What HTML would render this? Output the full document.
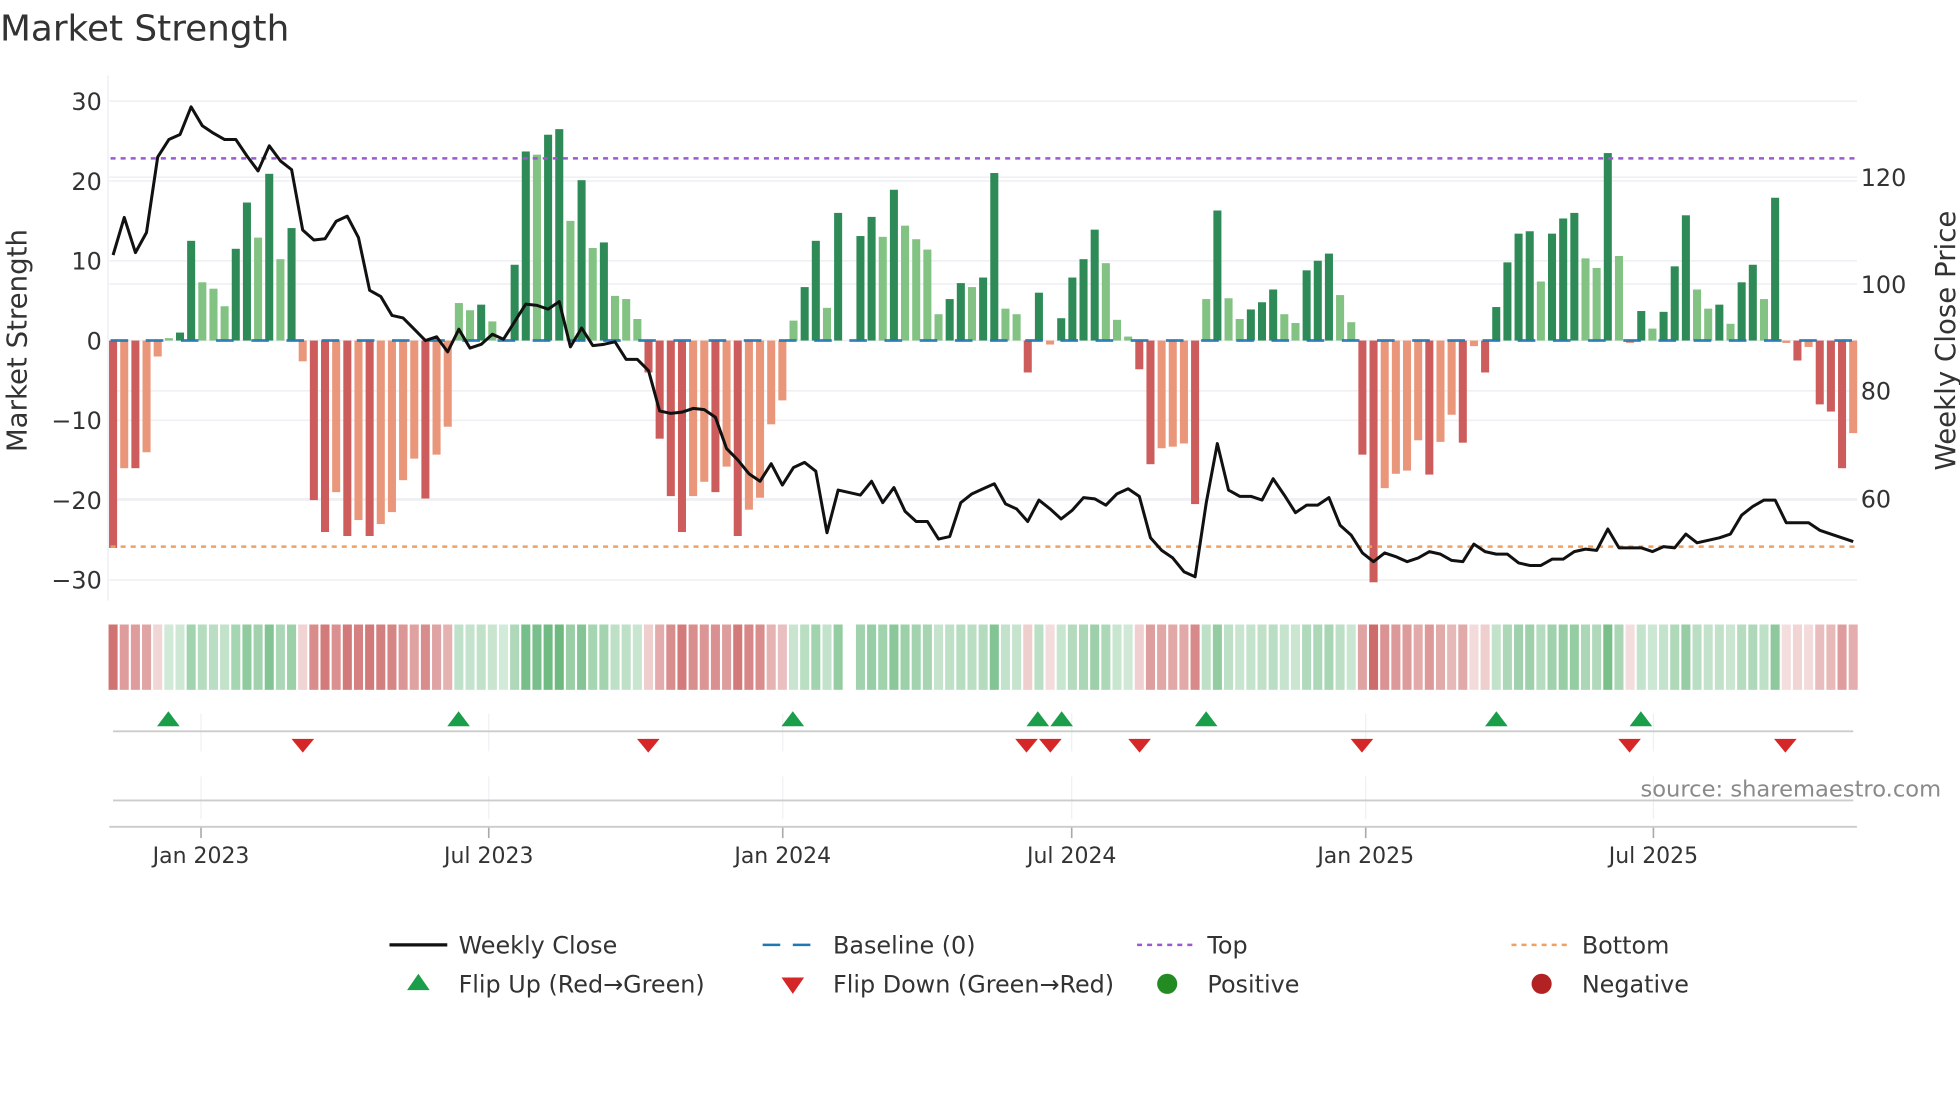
<!DOCTYPE html>
<html><head><meta charset="utf-8"><style>
html,body{margin:0;padding:0;background:#fff;width:1960px;height:1102px;overflow:hidden}
svg{display:block}
text{font-family:"DejaVu Sans","Liberation Sans",sans-serif;fill:#333}
</style></head><body>
<svg id="s" width="1960" height="1102" viewBox="0 0 1560 877" xmlns="http://www.w3.org/2000/svg">
<text x="0" y="32" font-size="28.5">Market Strength</text>
<g id="g"></g>
</svg>
<script>
var V=[-26,-16,-16,-14,-2,0.3,1,12.5,7.3,6.5,4.3,11.5,17.3,12.9,20.9,10.2,14.1,-2.6,-20,-24,-19,-24.5,-22.5,-24.5,-23,-21.5,-17.5,-14.8,-19.8,-14.3,-10.8,4.7,3.8,4.5,2.4,0.1,9.5,23.7,23.3,25.8,26.5,15,20.1,11.6,12.3,5.6,5.2,2.7,-4,-12.3,-19.5,-24,-19.5,-17.7,-19,-15.8,-24.5,-21.2,-19.7,-10.5,-7.5,2.5,6.7,12.5,4.1,16,0,13.1,15.5,13,18.9,14.4,12.7,11.4,3.3,5.2,7.2,6.7,7.9,21,4,3.3,-4,6,-0.5,2.8,7.9,10.2,13.9,9.7,2.6,0.5,-3.6,-15.5,-13.5,-13.3,-12.9,-20.5,5.2,16.3,5.3,2.7,3.9,4.8,6.4,3.3,2.2,8.8,10,10.9,5.7,2.3,-14.3,-30.3,-18.5,-16.7,-16.3,-12.5,-16.8,-12.7,-9.3,-12.8,-0.7,-4,4.2,9.8,13.4,13.7,7.4,13.4,15.3,16,10.3,9.1,23.5,10.6,-0.3,3.7,1.5,3.6,9.3,15.7,6.4,4,4.5,2.1,7.3,9.5,5.2,17.9,-0.3,-2.5,-0.8,-8,-8.9,-16,-11.6];
var P=[203,173,201,185,125,111,107,85,100,106,111,111,124,136,116,128,135,183,191,190,176,172,189,231,236,251,253,262,271,268,280,262,277,274,266,270,256,242,243,246,240,276,261,275,274,272,286,286,295,327,329,328,325,326,332,357,366,377,383,369,386,372,368,375,424,390,392,394,383,400,388,407,415,415,429,427,400,393,389,385,401,405,415,398,405,413,406,396,397,402,393,389,395,428,438,444,455,459,400,353,390,395,395,398,381,394,408,402,402,396,418,426,440,447,440,443,447,444,439,441,446,447,433,439,441,441,448,450,450,445,445,439,437,438,421,436,436,436,439,435,436,425,432,430,428,425,410,403,398,398,416,416,416,422,425,428,431];
var n=V.length,x0=90,dx=(1475-90)/(n-1);
function X(i){return x0+i*dx}
function Y(v){return 271-v*6.35}
var h='';
[30,20,10,0,-10,-20,-30].forEach(function(v){h+='<line x1="87" x2="1478" y1="'+Y(v)+'" y2="'+Y(v)+'" stroke="#eef0f4" stroke-width="1.3"/>';
h+='<text x="81" y="'+(Y(v)+7)+'" font-size="19" text-anchor="end">'+(v<0?'\u2212'+(-v):v)+'</text>';});
[[120,141],[100,226],[80,311],[60,397]].forEach(function(a){h+='<line x1="87" x2="1478" y1="'+a[1]+'" y2="'+a[1]+'" stroke="#eef0f4" stroke-width="1.3"/><text x="1481" y="'+(a[1]+7)+'" font-size="19">'+a[0]+'</text>';});
h+='<line x1="86" x2="86" y1="60" y2="478" stroke="#eef0f4" stroke-width="1.3"/>';
var ticks=[[160,'Jan 2023'],[389,'Jul 2023'],[623,'Jan 2024'],[853,'Jul 2024'],[1087,'Jan 2025'],[1316,'Jul 2025']];
ticks.forEach(function(t){h+='<line x1="'+t[0]+'" x2="'+t[0]+'" y1="568" y2="598" stroke="#eef0f4"/><line x1="'+t[0]+'" x2="'+t[0]+'" y1="618" y2="652" stroke="#eef0f4"/><line x1="'+t[0]+'" x2="'+t[0]+'" y1="658" y2="667" stroke="#aaa" stroke-width="1.3"/><text x="'+t[0]+'" y="687" font-size="17.5" text-anchor="middle">'+t[1]+'</text>';});
for(var i=0;i<n;i++){var v=V[i],p=i?Math.abs(V[i-1]):0,dark=Math.abs(v)>=p;var c=v>=0?(dark?'#2e8b57':'#82c282'):(dark?'#cd5c5c':'#e9967a');
var y1=Math.min(Y(v),271),hh=Math.abs(Y(v)-271);h+='<rect x="'+(X(i)-3.2)+'" y="'+y1+'" width="6.4" height="'+hh+'" fill="'+c+'"/>';}
h+='<line x1="88" x2="1476" y1="271" y2="271" stroke="#1f77b4" stroke-width="2.2" stroke-dasharray="14,14" opacity="0.9"/>';
h+='<line x1="88" x2="1476" y1="126" y2="126" stroke="#9b59d0" stroke-width="2" stroke-dasharray="4,4"/>';
h+='<line x1="88" x2="1476" y1="435" y2="435" stroke="#f0a060" stroke-width="2" stroke-dasharray="4,4"/>';
var pts='';for(i=0;i<n;i++)pts+=X(i).toFixed(1)+','+P[i]+' ';
h+='<polyline points="'+pts+'" fill="none" stroke="#111" stroke-width="2.4" stroke-linejoin="round"/>';
for(i=0;i<n;i++){var v=V[i];var t=Math.min(Math.abs(v)/28,1);var c;
if(v>0){t=0.25+0.6*t;c='rgb('+Math.round(255-(255-76)*t)+','+Math.round(255-(255-170)*t)+','+Math.round(255-(255-100)*t)+')';}
else if(v<0){t=0.2+0.7*t;c='rgb('+Math.round(255-(255-200)*t)+','+Math.round(255-(255-90)*t)+','+Math.round(255-(255-90)*t)+')';}
else c='#fff';
h+='<rect x="'+(X(i)-3.6)+'" y="497" width="7.2" height="52" fill="'+c+'"/>';}
h+='<line x1="90" x2="1475" y1="582" y2="582" stroke="#ccc" stroke-width="1.5"/><line x1="90" x2="1475" y1="637" y2="637" stroke="#ccc" stroke-width="1.5"/><line x1="87" x2="1478" y1="658" y2="658" stroke="#ccc" stroke-width="1.5"/>';
[134,365,631,826,845,960,1191,1306].forEach(function(x){h+='<polygon points="'+(x-9)+',578 '+(x+9)+',578 '+x+',566" fill="#1a9e4a"/>';});
[241,516,817,836,907,1084,1297,1421].forEach(function(x){h+='<polygon points="'+(x-9)+',588 '+(x+9)+',588 '+x+',599" fill="#d62728"/>';});
h+='<text x="1545" y="634" font-size="18" text-anchor="end" style="fill:#8a8a8a">source: sharemaestro.com</text>';
h+='<text transform="translate(21,271) rotate(-90)" font-size="22" text-anchor="middle">Market Strength</text>';
h+='<text transform="translate(1556,271) rotate(-90)" font-size="22" text-anchor="middle">Weekly Close Price</text>';
h+='<line x1="310" x2="356" y1="752" y2="752" stroke="#111" stroke-width="2.6"/><text x="365" y="759" font-size="19">Weekly Close</text>';
h+='<line x1="607" x2="651" y1="752" y2="752" stroke="#1f77b4" stroke-width="2" stroke-dasharray="14,10"/><text x="663" y="759" font-size="19">Baseline (0)</text>';
h+='<line x1="905" x2="949" y1="752" y2="752" stroke="#9b59d0" stroke-width="2" stroke-dasharray="4,4"/><text x="961" y="759" font-size="19">Top</text>';
h+='<line x1="1203" x2="1247" y1="752" y2="752" stroke="#f0a060" stroke-width="2" stroke-dasharray="4,4"/><text x="1259" y="759" font-size="19">Bottom</text>';
h+='<polygon points="324,788 342,788 333,775" fill="#1a9e4a"/><text x="365" y="790" font-size="19">Flip Up (Red\u2192Green)</text>';
h+='<polygon points="622,778 640,778 631,791" fill="#d62728"/><text x="663" y="790" font-size="19">Flip Down (Green\u2192Red)</text>';
h+='<circle cx="929" cy="783" r="8" fill="#228b22"/><text x="961" y="790" font-size="19">Positive</text>';
h+='<circle cx="1227" cy="783" r="8" fill="#b22222"/><text x="1259" y="790" font-size="19">Negative</text>';
document.getElementById('g').innerHTML=h;
</script>
</body></html>
